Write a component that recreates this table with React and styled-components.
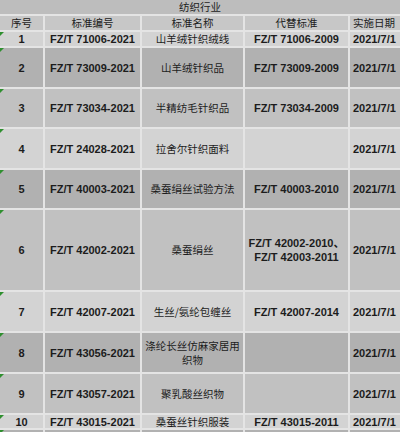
import React from "react";
import styled, { createGlobalStyle } from "styled-components";

const Global = createGlobalStyle`
  html, body { margin: 0; padding: 0; background: #e4e4e4; }
  body { width: 400px; height: 432px; overflow: hidden; }
`;

const Sheet = styled.div`
  display: grid;
  grid-template-columns: 43px 95px 101px 103px 1fr;
  column-gap: 2px;
  row-gap: 2px;
  width: 400px;
  background: #e4e4e4;
`;

const shades = {
  title: "#bdbdbd",
  head: "#c7c7c7",
  light: "#d3d3d3",
  dark: "#b1b1b1",
  mid: "#c1c1c1",
};

const Cell = styled.div`
  position: relative;
  height: ${(p) => p.$h}px;
  background: ${(p) => shades[p.$tone]};
  display: flex;
  align-items: center;
  justify-content: ${(p) => (p.$left ? "flex-start" : "center")};
  text-align: ${(p) => (p.$left ? "left" : "center")};
  padding: ${(p) => (p.$left ? "0 0 0 3px" : "0 2px")};
  box-sizing: border-box;
  overflow: hidden;
  white-space: nowrap;
  color: #1c1c1c;
  font-family: ${(p) =>
    p.$cn
      ? `"Noto Sans CJK SC", "Noto Sans", sans-serif`
      : `"Liberation Sans", Arial, "Noto Sans CJK SC", sans-serif`};
  font-size: ${(p) => (p.$cn ? "10.5px" : "11px")};
  font-weight: ${(p) => (p.$cn ? 400 : 700)};
  line-height: 14px;
`;

const TitleCell = styled(Cell)`
  grid-column: 1 / -1;
`;

const Flag = styled.span`
  position: absolute;
  left: 0;
  top: 0;
  width: 0;
  height: 0;
  border-top: 4px solid #2f8f2f;
  border-right: 4px solid transparent;
`;

const Lines = ({ lines }) => (
  <span>
    {lines.map((l, i) => (
      <React.Fragment key={i}>
        {i > 0 && <br />}
        {l}
      </React.Fragment>
    ))}
  </span>
);

const rows = [
  { n: "1", code: "FZ/T 71006-2021", name: ["山羊绒针织绒线"], rep: ["FZ/T 71006-2009"], h: 14 },
  { n: "2", code: "FZ/T 73009-2021", name: ["山羊绒针织品"], rep: ["FZ/T 73009-2009"], h: 39 },
  { n: "3", code: "FZ/T 73034-2021", name: ["半精纺毛针织品"], rep: ["FZ/T 73034-2009"], h: 38 },
  { n: "4", code: "FZ/T 24028-2021", name: ["拉舍尔针织面料"], rep: [], h: 39 },
  { n: "5", code: "FZ/T 40003-2021", name: ["桑蚕绢丝试验方法"], rep: ["FZ/T 40003-2010"], h: 38 },
  { n: "6", code: "FZ/T 42002-2021", name: ["桑蚕绢丝"], rep: ["FZ/T 42002-2010、", "FZ/T 42003-2011"], h: 80 },
  { n: "7", code: "FZ/T 42007-2021", name: ["生丝/氨纶包缠丝"], rep: ["FZ/T 42007-2014"], h: 39 },
  { n: "8", code: "FZ/T 43056-2021", name: ["涤纶长丝仿麻家居用", "织物"], rep: [], h: 39 },
  { n: "9", code: "FZ/T 43057-2021", name: ["聚乳酸丝织物"], rep: [], h: 39 },
  { n: "10", code: "FZ/T 43015-2021", name: ["桑蚕丝针织服装"], rep: ["FZ/T 43015-2011"], h: 13 },
  { n: "", code: "", name: [], rep: [], h: 12, date: "" },
];

const toneCycle = ["light", "dark", "mid"];

export default function App() {
  return (
    <>
      <Global />
      <Sheet>
        <TitleCell $tone="title" $h={14} $cn>
          纺织行业
        </TitleCell>
        {["序号", "标准编号", "标准名称", "代替标准"].map((t) => (
          <Cell key={t} $tone="head" $h={14} $cn>
            {t}
          </Cell>
        ))}
        <Cell $tone="head" $h={14} $cn $left>
          实施日期
        </Cell>
        {rows.map((r, i) => {
          const tone = toneCycle[i % 3];
          const date = r.date === undefined ? "2021/7/1" : r.date;
          return (
            <React.Fragment key={i}>
              <Cell $tone={tone} $h={r.h}>
                <Flag />
                {r.n}
              </Cell>
              <Cell $tone={tone} $h={r.h}>
                {r.code}
              </Cell>
              <Cell $tone={tone} $h={r.h} $cn>
                <Lines lines={r.name} />
              </Cell>
              <Cell $tone={tone} $h={r.h}>
                <Lines lines={r.rep} />
              </Cell>
              <Cell $tone={tone} $h={r.h} $left>
                {date}
              </Cell>
            </React.Fragment>
          );
        })}
      </Sheet>
    </>
  );
}
